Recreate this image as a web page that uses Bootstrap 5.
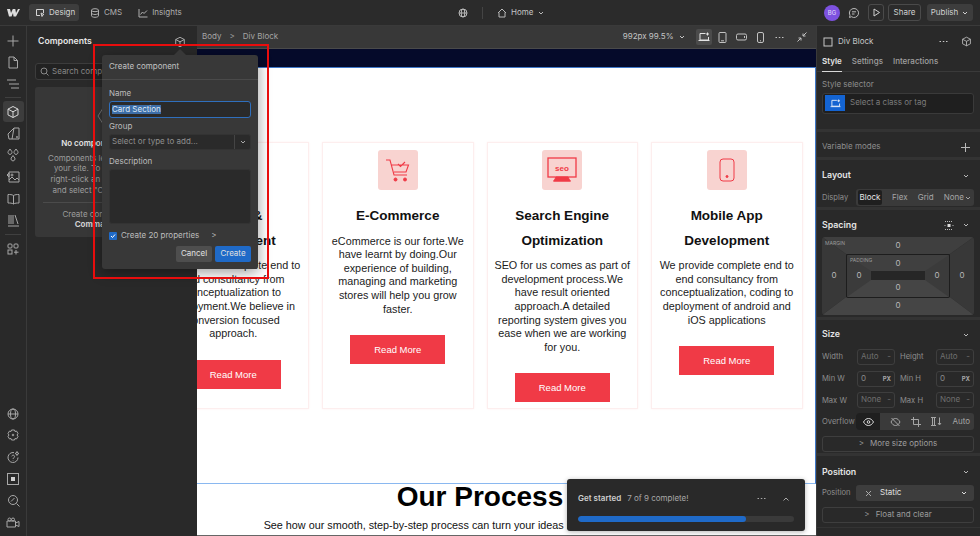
<!DOCTYPE html>
<html lang="en">
<head>
<meta charset="UTF-8">
<title>Designer</title>
<link href="https://cdn.jsdelivr.net/npm/bootstrap@5.3.3/dist/css/bootstrap.min.css" rel="stylesheet">
<style>
  html, body { height: 100%; overflow: hidden; }
  body { background: #292929; color: #b9b9b9; font: 8px/1.2 Inter, "Liberation Sans", sans-serif; }
  svg { display: block; flex: none; fill: none; stroke: currentColor; stroke-width: 1; }
  .app-shell { position: relative; width: 980px; height: 536px; }
  .top-bar { height: 26px; background: #2b2b2b; border-bottom: 1px solid #3a3a3a; padding: 0 6px 0 7px; }
  .top-left, .top-mid, .top-right { height: 25px; }
  .top-left { width: 421px; }
  .top-mid { width: 396px; padding-left: 30px; }
  .logo-mark { width: 13px; margin-right: 9px; color: #ddd; }
  .tab-design { width: 50px; height: 17px; background: #3d3d3d; border-radius: 3px; color: #d4d4d4; gap: 4px; padding-left: 6px; }
  .tab-plain { gap: 4px; margin-left: 16px; color: #b0b0b0; }
  .tab-cms { margin-left: 11px; }
  .v-rule { width: 1px; height: 12px; background: #444; margin: 0 14px 0 14px; }
  .avatar { width: 16px; height: 16px; border-radius: 50%; background: #7d52e0; color: #e4dcfa; font-size: 6px; margin-right: 8px; }
  .ghost-box { height: 17px; border: 1px solid #4a4a4a; border-radius: 3px; color: #d0d0d0; }
  .publish-btn { width: 46px; height: 17px; background: #3d3d3d; border-radius: 3px; color: #d0d0d0; margin-left: 6px; gap: 3px; }

  .work-area { height: 510px; }
  .left-rail { width: 27px; border-right: 1px solid #3a3a3a; background: #292929; color: #a8a8a8; padding-top: 4px; }
  .rail-item { width: 27px; height: 21.7px; }
  .rail-item.is-on { position: relative; color: #d8d8d8; }
  .rail-item.is-on::before { content: ""; position: absolute; left: 3px; top: 0; width: 21px; height: 21px; background: #3d3d3d; border-radius: 3px; z-index: 0; }
  .rail-item.is-on svg { position: relative; }
  .rail-gap { width: 16px; height: 1px; background: #404040; margin: 2px auto 3px; }
  .rail-bottom { margin-top: auto; padding-bottom: 3px; }

  .side-panel { width: 170px; background: #292929; padding: 0 8px; position: relative; }
  .panel-head { height: 30px; padding: 1px 3px 0; color: #e6e6e6; font-weight: 600; font-size: 8.7px; }
  .panel-search { height: 17px; margin-top: 7px; border: 1px solid #3c3c3c; border-radius: 3px; background: #222; color: #888; padding-left: 4px; gap: 3px; }
  .empty-box { margin-top: 7px; height: 150px; background: #373737; border-radius: 3px; text-align: center; padding: 17px 0 0; line-height: 10.7px; color: #9d9d9d; white-space: nowrap; }
  .empty-hex { margin: 0 auto 10px; color: #777; }
  .empty-title { color: #e4e4e4; font-weight: 600; margin-bottom: 4px; }
  .empty-rule { height: 1px; background: #4b4b4b; margin: 6px 8px; }

  .center-col { width: 619px; }
  .crumb-bar { height: 23px; background: #383838; border-bottom: 1px solid #4a4a4a; padding: 0 5px 0 5px; color: #a5a5a5; }
  .crumb-sep { margin: 0 8px; }
  .size-readout { color: #c4c4c4; margin-right: 10px; gap: 4px; }
  .device-on { width: 16px; height: 16px; background: #4b4b4b; border-radius: 2px; color: #e4e4e4; margin-right: 1.5px; }
  .device-btn { width: 19px; color: #c2c2c2; }
  .device-last { margin-left: 3px; }

  .canvas-view { flex: 1; background: #fff; overflow: hidden; position: relative; border-bottom: 1px solid #666; }
  .navy-strip { height: 18px; background: #050a2a; }
  .site-page { margin-left: -53px; width: 672px; color: #111; font-family: "Liberation Sans", Arial, sans-serif; }
  .selected-block { border: 1px solid #3f78c8; border-bottom-color: #8ab8f0; border-left: 0; padding: 74px 12.5px 0 13.5px; height: 417px; }
  .svc-row { gap: 13px; height: 267px; }
  .svc-card { flex: 1 1 0; min-width: 0; border: 1px solid #fdeeee; box-shadow: 0 0 2px #fff0f0; padding: 7px 6px 0; text-align: center; }
  .svc-icon { width: 40px; height: 40px; background: #f8d3d0; border-radius: 3px; margin: 0 auto 14px; color: #f03a46; }
  .svc-title { font-size: 13.5px; font-weight: 700; line-height: 24.6px; margin: 0 0 6px; color: #111; }
  .svc-text { font-size: 10.8px; line-height: 13.6px; margin: 0 0 19px; color: #1b1b1b; }
  .svc-btn { display: block; width: 95px; height: 29px; line-height: 29px; margin: 0 auto; background: #f03a46; color: #fff; font-size: 9.5px; }
  .process-title { font-size: 28px; font-weight: 700; line-height: 26px; margin: 0; text-align: center; color: #000; }
  .process-sub { font-size: 10.8px; line-height: 14px; margin: 8px 0 0; text-align: center; white-space: nowrap; }

  .style-panel { width: 164px; border-left: 1px solid #3a3a3a; background: #292929; }
  .sp-head { height: 24px; padding: 7px 8px 0 6px; color: #c8c8c8; gap: 5px; }
  .sp-tabs { height: 22px; padding: 0 5px; border-bottom: 1px solid #3a3a3a; gap: 10px; color: #a0a0a0; font-weight: 500; }
  .sp-tab-on { color: #e6e6e6; font-weight: 600; height: 22px; line-height: 22px; border-bottom: 1px solid #d8d8d8; }
  .sp-sec { padding: 0 6px 0 5px; border-bottom: 3px solid #333; }
  .sec-title { color: #e4e4e4; font-weight: 600; font-size: 8.8px; }
  .sec-chev { margin-right: 4px; }
  .muted-lbl { color: #8d8d8d; }
  .row-lbl { font-size: 7.6px; }
  .sel-box { height: 21px; background: #1f1f1f; border: 1px solid #3a3a3a; border-radius: 3px; margin-top: 3px; padding-left: 2px; gap: 5px; color: #7c7c7c; }
  .sel-chip { width: 20px; height: 16px; background: #1464d2; color: #e6effa; }
  .seg-group { width: 118px; height: 17px; background: #3a3a3a; border-radius: 3px; color: #a6a6a6; padding: 0 2px 0 2px; }
  .seg-on { background: #1f1f1f; color: #e6e6e6; border-radius: 2px; height: 15px; width: 24px; }
  .spacing-box { position: relative; height: 78px; color: #b9b9b9; border-radius: 3px; overflow: hidden; }
  .spacing-bg { position: absolute; inset: 0; width: 100%; height: 100%; stroke: none; }
  .spacing-lbl { position: absolute; font-size: 5px; color: #9a9a9a; }
  .spacing-val { position: absolute; transform: translate(-50%, -50%); }
  .size-row { height: 21.7px; gap: 5px; }
  .size-lbl { width: 30px; color: #8d8d8d; font-size: 7.6px; }
  .size-lbl-r { width: 31px; color: #8d8d8d; font-size: 7.6px; }
  .size-input { width: 38px; height: 16px; border: 1px solid #3e3e3e; border-radius: 3px; padding: 0 3px; color: #707070; }
  .size-input b { font-size: 6px; color: #a8a8a8; }
  .size-input.has-num { color: #8a8a8a; }
  .ovf-group { width: 118px; height: 17px; background: #3a3a3a; border-radius: 3px; color: #a6a6a6; overflow: hidden; }
  .ovf-on { width: 24px; height: 17px; background: #1f1f1f; color: #ddd; }
  .wide-btn { height: 16px; border: 1px solid #3e3e3e; border-radius: 3px; color: #9d9d9d; gap: 6px; }
  .pos-select { width: 118px; height: 16px; background: #3d3d3d; border-radius: 3px; padding: 0 6px 0 9px; color: #e0e0e0; }

  .create-pop { position: absolute; left: 102px; top: 55px; width: 156px; height: 214px; background: #383838; border-radius: 3px; box-shadow: 0 3px 14px rgba(0,0,0,.4); color: #bdbdbd; z-index: 5; padding: 0 7px; }
  .create-pop::before { content: ""; position: absolute; left: 72px; top: -6px; border: 6px solid transparent; border-top: 0; border-bottom-color: #383838; }
  .pop-head { height: 25px; margin: 0 -7px; padding: 0 7px; border-bottom: 1px solid #4a4a4a; color: #c2c2c2; }
  .pop-lbl { line-height: 11px; }
  .pop-input { height: 17px; margin-top: 2px; background: #2a2a2a; border: 1px solid #2f6fbd; border-radius: 3px; padding-left: 2px; color: #d8d8d8; }
  .text-hl { background: #3d6ea8; color: #dfe9f5; }
  .pop-select { height: 16px; margin-top: 2px; background: #2a2a2a; border: 1px solid #333; border-radius: 3px; color: #8f8f8f; padding-left: 2px; }
  .pop-select-arrow { width: 16px; height: 14px; border-left: 1px solid #444; color: #aaa; }
  .pop-area { height: 55px; margin-top: 2px; background: #2a2a2a; border: 1px solid #333; border-radius: 3px; }
  .pop-check { width: 8px; height: 8px; background: #1f6ac8; border-radius: 1px; color: #fff; }
  .pop-btn { height: 16px; border-radius: 2px; color: #e0e0e0; }
  .red-frame { position: absolute; left: 93px; top: 44px; width: 176px; height: 235px; border: 2px solid #e80d0d; z-index: 6; pointer-events: none; }

  .start-toast { position: absolute; left: 567px; top: 479px; width: 238px; height: 52px; background: #292929; border-radius: 3px; padding: 0 11px; z-index: 4; color: #a8a8a8; box-shadow: 0 1px 5px rgba(0,0,0,.3); }
  .toast-bar { height: 6px; background: #3a3a3a; border-radius: 3px; margin-top: 8px; overflow: hidden; }
  .toast-fill { height: 6px; background: #1f6ac8; border-radius: 3px; }
</style>
</head>
<body>
<svg width="0" height="0" style="position:absolute">
  <defs>
    <symbol id="i-chev" viewBox="0 0 8 8"><path d="M2 3l2 2 2-2"/></symbol>
    <symbol id="i-cube" viewBox="0 0 14 14"><path d="M7 1.500l5 2.600v5.800l-5 2.600-5-2.600V4.100zM2 4.100l5 2.700 5-2.700M7 6.800v5.700"/></symbol>
  </defs>
</svg>

<div class="app-shell">
  <!-- top bar -->
  <div class="top-bar d-flex align-items-center">
    <div class="top-left d-flex align-items-center">
      <svg class="logo-mark" width="13" height="9" viewBox="0 0 13 9" style="stroke:none;fill:currentColor"><path d="M0 1h3l1 4 1.800-4h2.500l.7 4 2-4H13L9 8.500H6.500L6 5 4.500 8.500H2z"/></svg>
      <div class="tab-design d-flex align-items-center">
        <svg width="10" height="10" viewBox="0 0 10 10"><path d="M8.500 5V1.500h-7v6H5M6 5l3 1.500-1.500.5-.5 1.500z"/></svg>Design
      </div>
      <div class="tab-plain tab-cms d-flex align-items-center">
        <svg width="10" height="10" viewBox="0 0 10 10"><ellipse cx="5" cy="2.200" rx="3.500" ry="1.500"/><path d="M1.500 2.200v5.600c0 .8 1.600 1.500 3.500 1.500s3.500-.7 3.500-1.500V2.200M1.500 5c0 .8 1.600 1.500 3.500 1.500S8.500 5.800 8.500 5"/></svg>CMS
      </div>
      <div class="tab-plain d-flex align-items-center">
        <svg width="10" height="10" viewBox="0 0 10 10"><path d="M1 1v8h8.500M2.500 6.500l2-2.500 1.500 1.500L9 2.500"/></svg>Insights
      </div>
    </div>
    <div class="top-mid d-flex align-items-center">
      <svg width="10" height="10" viewBox="0 0 10 10"><circle cx="5" cy="5" r="4"/><ellipse cx="5" cy="5" rx="1.800" ry="4"/><path d="M1 5h8"/></svg>
      <span class="v-rule"></span>
      <svg width="10" height="10" viewBox="0 0 10 10" class="me-1"><path d="M1 5l4-4 4 4M2 4.500V9h6V4.500"/></svg>
      <span style="color:#c4c4c4">Home</span>
      <svg width="8" height="8" class="ms-1"><use href="#i-chev"/></svg>
    </div>
    <div class="top-right d-flex align-items-center">
      <div class="avatar d-flex align-items-center justify-content-center">BG</div>
      <svg width="12" height="12" viewBox="0 0 12 12" class="me-2"><path d="M6 1.500a4.500 4.500 0 1 1-2.500 8.200L1.500 10.500l.5-2.200A4.500 4.500 0 0 1 6 1.500zM4 4.800h4M4 7h2.500"/></svg>
      <div class="ghost-box d-flex align-items-center justify-content-center" style="width:16px">
        <svg width="9" height="9" viewBox="0 0 9 9"><path d="M2 1l5.500 3.500L2 8z"/></svg>
      </div>
      <div class="ghost-box d-flex align-items-center justify-content-center ms-1" style="width:33px">Share</div>
      <div class="publish-btn d-flex align-items-center justify-content-center">Publish<svg width="8" height="8"><use href="#i-chev"/></svg></div>
    </div>
  </div>

  <div class="work-area d-flex">
    <!-- left icon rail -->
    <div class="left-rail d-flex flex-column align-items-center">
      <div class="rail-item d-flex align-items-center justify-content-center"><svg width="12" height="12" viewBox="0 0 12 12"><path d="M6 .5v11M.5 6h11"/></svg></div>
      <div class="rail-item d-flex align-items-center justify-content-center"><svg width="12" height="13" viewBox="0 0 12 13"><path d="M2 1h5l3.500 3.500V12H2zM7 1v3.500h3.500"/></svg></div>
      <div class="rail-item d-flex align-items-center justify-content-center"><svg width="14" height="10" viewBox="0 0 14 10"><path d="M1 1h9M3 5h10M5 9h8"/></svg></div>
      <div class="rail-gap"></div>
      <div class="rail-item is-on d-flex align-items-center justify-content-center"><svg width="14" height="14"><use href="#i-cube"/></svg></div>
      <div class="rail-item d-flex align-items-center justify-content-center"><svg width="13" height="13" viewBox="0 0 13 13"><path d="M7 1h5v11H5zM7 1L1 7l1 5h3" /><circle cx="10" cy="10" r=".6"/></svg></div>
      <div class="rail-item d-flex align-items-center justify-content-center"><svg width="12" height="14" viewBox="0 0 12 14"><path d="M3 1l1.800 2.500a2 2 0 1 1-3.600 0zM9 1l1.800 2.500a2 2 0 1 1-3.600 0zM6 7.500l1.800 2.500a2 2 0 1 1-3.600 0z"/></svg></div>
      <div class="rail-item d-flex align-items-center justify-content-center"><svg width="14" height="13" viewBox="0 0 14 13"><path d="M3 2h10v10H3zM3 10l3-3 3 3 2-2 2 2M1 5l2-2v4z"/><circle cx="6" cy="5" r="1"/></svg></div>
      <div class="rail-item d-flex align-items-center justify-content-center"><svg width="13" height="12" viewBox="0 0 13 12"><path d="M6.500 2.500C5 1.500 3 1.500 1 1.500v8.500c2 0 4 0 5.500 1 1.500-1 3.500-1 5.500-1V1.500c-2 0-4 0-5.500 1zM6.500 2.500V11"/></svg></div>
      <div class="rail-item d-flex align-items-center justify-content-center"><svg width="13" height="13" viewBox="0 0 13 13"><path d="M2 1v9M4 1v9M6 1v9M8 1l3 9M1 12h11"/></svg></div>
      <div class="rail-gap" style="margin:3px auto 3px"></div>
      <div class="rail-item d-flex align-items-center justify-content-center"><svg width="12" height="12" viewBox="0 0 12 12"><rect x="1" y="1" width="4" height="4" rx="1"/><rect x="7" y="1" width="4" height="4" rx="1"/><rect x="1" y="7" width="4" height="4"/><path d="M9 7v4.500M7 9.200h4.500"/></svg></div>
      <div class="rail-bottom d-flex flex-column align-items-center">
        <div class="rail-item d-flex align-items-center justify-content-center"><svg width="12" height="12" viewBox="0 0 12 12"><circle cx="6" cy="6" r="5"/><ellipse cx="6" cy="6" rx="2.500" ry="5"/><path d="M1 6h10"/></svg></div>
        <div class="rail-item d-flex align-items-center justify-content-center"><svg width="12" height="12" viewBox="0 0 12 12"><path d="M4.500 1h3l.5 1.500 1.600-.4 1.400 2.500-1 1.400 1 1.400-1.400 2.500-1.600-.4-.5 1.500h-3L4 9.500l-1.600.4L1 7.400l1-1.400-1-1.400 1.400-2.500L4 2.500z"/><circle cx="6" cy="6" r=".8"/></svg></div>
        <div class="rail-item d-flex align-items-center justify-content-center"><svg width="13" height="13" viewBox="0 0 13 13"><path d="M7 1.600A5 5 0 1 0 11 6.500M4.800 5.300a1.400 1.400 0 1 1 2 1.500c-.5.300-.8.600-.8 1.200M6 9.500v.5M10 .5l.6 1.400 1.400.6-1.400.6-.6 1.400-.6-1.400L8 2.500l1.400-.6z"/></svg></div>
        <div class="rail-item d-flex align-items-center justify-content-center"><svg width="12" height="12" viewBox="0 0 12 12"><rect x=".5" y=".5" width="11" height="11"/><rect x="4" y="4" width="4" height="4" style="fill:#cfcfcf;stroke:none"/></svg></div>
        <div class="rail-item d-flex align-items-center justify-content-center"><svg width="13" height="13" viewBox="0 0 13 13"><circle cx="6" cy="6" r="4.500"/><path d="M9.500 9.500l3 3M4 7.500L7.500 4"/></svg></div>
        <div class="rail-item d-flex align-items-center justify-content-center"><svg width="14" height="11" viewBox="0 0 14 11"><path d="M1 4h8.500v6H1zM9.500 6L13 4.500v5L9.500 8"/><circle cx="3.500" cy="2.500" r="1.500"/><circle cx="7" cy="2.500" r="1.500"/></svg></div>
      </div>
    </div>

    <!-- components panel -->
    <div class="side-panel">
      <div class="panel-head d-flex align-items-center justify-content-between">
        <span>Components</span>
        <svg width="12" height="12" style="color:#bbb"><use href="#i-cube"/></svg>
      </div>
      <div class="panel-search d-flex align-items-center">
        <svg width="9" height="9" viewBox="0 0 9 9"><circle cx="4" cy="4" r="3"/><path d="M6.300 6.300L8.500 8.500"/></svg>Search components
      </div>
      <div class="empty-box">
        <svg class="empty-hex" width="30" height="24" viewBox="0 0 30 24"><path d="M8 1h14l7 11-7 11H8L1 12z"/></svg>
        <div class="empty-title">No components added yet</div>
        Components let you reuse groups<br>your site. To create one, select<br>right-click an element on canvas<br>and select "Create component"
        <div class="empty-rule"></div>
        Create components with a<br><b style="color:#cfcfcf">Command+Shift+A</b>
      </div>
    </div>

    <!-- canvas -->
    <div class="center-col d-flex flex-column">
      <div class="crumb-bar d-flex align-items-center">
        <span>Body</span><span class="crumb-sep">&gt;</span><span>Div Block</span>
        <div class="ms-auto d-flex align-items-center">
          <div class="size-readout d-flex align-items-center"><span>992px 99.5%</span><svg width="8" height="8"><use href="#i-chev"/></svg></div>
          <div class="device-on d-flex align-items-center justify-content-center"><svg width="12" height="10" viewBox="0 0 12 10"><path d="M7.500 1.500H2v6.500h8.500V5M.5 8.500h11"/><path d="M9.500.5v3M8 2h3"/></svg></div>
          <div class="device-btn d-flex justify-content-center"><svg width="9" height="11" viewBox="0 0 9 11"><rect x="1" y=".5" width="7" height="10" rx="1"/><path d="M3 8.800h3"/></svg></div>
          <div class="device-btn d-flex justify-content-center"><svg width="11" height="8" viewBox="0 0 11 8"><rect x=".5" y="1" width="10" height="6" rx="1.500"/><path d="M8.500 3v2"/></svg></div>
          <div class="device-btn d-flex justify-content-center"><svg width="7" height="11" viewBox="0 0 7 11"><rect x=".5" y=".5" width="6" height="10" rx="1.500"/><path d="M3 8.800h1"/></svg></div>
          <div class="device-btn d-flex justify-content-center"><svg width="9" height="3" viewBox="0 0 9 3"><path d="M.5 1.500h1.500M3.800 1.500h1.500M7 1.500h1.500"/></svg></div>
          <div class="device-btn device-last d-flex justify-content-center"><svg width="10" height="10" viewBox="0 0 10 10"><path d="M9.500.5L6 4M6 1.500V4h2.500M.5 9.500L4 6M1.500 6H4v2.500"/></svg></div>
        </div>
      </div>
      <div class="canvas-view">
        <div class="navy-strip"></div>
        <div class="site-page">
          <div class="selected-block">
            <div class="svc-row d-flex">
              <div class="svc-card">
                <div class="svc-icon"></div>
                <h5 class="svc-title">Design &amp;<br>Development</h5>
                <p class="svc-text">We provide complete end to<br>end consultancy from<br>conceptualization to<br>deployment.We believe in<br>conversion focused<br>approach.</p>
                <a class="svc-btn text-decoration-none">Read More</a>
              </div>
              <div class="svc-card">
                <div class="svc-icon d-flex align-items-center justify-content-center">
                  <svg width="26" height="26" viewBox="0 0 26 26"><path d="M1 3h4l4 15h13M6.500 8h17l-2.500 7H9M13 7l2.500 2.500L20 5" stroke-width="1.100"/><circle cx="10.500" cy="22.500" r="1.500" style="fill:currentColor"/><circle cx="20" cy="22.500" r="1.500" style="fill:currentColor"/></svg>
                </div>
                <h5 class="svc-title">E-Commerce</h5>
                <p class="svc-text">eCommerce is our forte.We have learnt by doing.Our experience of building, managing and marketing stores will help you grow faster.</p>
                <a class="svc-btn text-decoration-none">Read More</a>
              </div>
              <div class="svc-card">
                <div class="svc-icon d-flex align-items-center justify-content-center">
                  <svg width="30" height="26" viewBox="0 0 30 26"><rect x="1" y="1" width="28" height="19" stroke-width="1.300"/><path d="M9 20h12l2 4H7zM6 24h18" style="fill:currentColor"/><text x="15" y="14" text-anchor="middle" style="font:700 8px 'Liberation Sans',sans-serif;fill:currentColor;stroke:none">seo</text></svg>
                </div>
                <h5 class="svc-title">Search Engine<br>Optimization</h5>
                <p class="svc-text">SEO for us comes as part of development process.We have result oriented approach.A detailed reporting system gives you ease when we are working for you.</p>
                <a class="svc-btn text-decoration-none">Read More</a>
              </div>
              <div class="svc-card">
                <div class="svc-icon d-flex align-items-center justify-content-center">
                  <svg width="16" height="24" viewBox="0 0 16 24"><rect x="1" y="1" width="14" height="22" rx="3"/><circle cx="8" cy="18.500" r="1" style="fill:currentColor"/></svg>
                </div>
                <h5 class="svc-title">Mobile App<br>Development</h5>
                <p class="svc-text">We provide complete end to end consultancy from conceptualization, coding to deployment of android and iOS applications</p>
                <a class="svc-btn text-decoration-none">Read More</a>
              </div>
            </div>
          </div>
          <h2 class="process-title">Our Process</h2>
          <p class="process-sub">See how our smooth, step-by-step process can turn your ideas into reality with confidence.</p>
        </div>
      </div>
    </div>

    <!-- style panel -->
    <div class="style-panel">
      <div class="sp-head d-flex align-items-center">
        <svg width="10" height="10" viewBox="0 0 10 10"><rect x="1" y="1" width="8" height="8"/></svg>
        <span>Div Block</span>
        <svg class="ms-auto me-2" width="9" height="3" viewBox="0 0 9 3"><path d="M.5 1.500h1.500M3.800 1.500h1.500M7 1.500h1.500"/></svg>
        <svg width="11" height="11"><use href="#i-cube"/></svg>
      </div>
      <div class="sp-tabs d-flex">
        <span class="sp-tab-on">Style</span><span style="line-height:22px">Settings</span><span style="line-height:22px">Interactions</span>
      </div>
      <div class="sp-sec" style="height:60px;padding-top:8px">
        <div class="muted-lbl">Style selector</div>
        <div class="sel-box d-flex align-items-center">
          <div class="sel-chip d-flex align-items-center justify-content-center"><svg width="11" height="9" viewBox="0 0 12 10"><path d="M7.500 1.500H2v6.500h8.500V5M.5 8.500h11"/><path d="M9.500.5v3M8 2h3"/></svg></div>
          <span>Select a class or tag</span>
        </div>
      </div>
      <div class="sp-sec d-flex align-items-center justify-content-between" style="height:28px;padding-top:5px">
        <span class="muted-lbl">Variable modes</span>
        <svg class="sec-chev" width="9" height="9" viewBox="0 0 9 9"><path d="M4.500 0v9M0 4.500h9"/></svg>
      </div>
      <div class="sp-sec" style="height:50px">
        <div class="d-flex align-items-center justify-content-between" style="height:29px;padding-top:2px"><span class="sec-title">Layout</span><svg class="sec-chev" width="8" height="8"><use href="#i-chev"/></svg></div>
        <div class="d-flex align-items-center justify-content-between">
          <span class="muted-lbl row-lbl">Display</span>
          <div class="seg-group d-flex align-items-center justify-content-between">
            <span class="seg-on d-flex align-items-center justify-content-center">Block</span><span>Flex</span><span>Grid</span><span class="d-flex align-items-center">None<svg width="8" height="8"><use href="#i-chev"/></svg></span>
          </div>
        </div>
      </div>
      <div class="sp-sec" style="height:110px">
        <div class="d-flex align-items-center" style="height:27px;padding-top:3px">
          <span class="sec-title">Spacing</span>
          <svg class="ms-auto me-2" width="10" height="9" viewBox="0 0 10 9"><path d="M1 .5h8M1 8.500h8M.5 4.500h1M8.500 4.500h1" stroke-dasharray="1 1"/><rect x="3.500" y="3" width="3" height="3" style="fill:#ddd;stroke:none"/></svg>
          <svg class="sec-chev" width="8" height="8"><use href="#i-chev"/></svg>
        </div>
        <div class="spacing-box">
          <svg class="spacing-bg" viewBox="0 0 152 78" preserveAspectRatio="none">
            <polygon points="0,0 152,0 128,17 24,17" style="fill:#3f3f3f"/>
            <polygon points="0,78 152,78 128,60 24,60" style="fill:#454545"/>
            <polygon points="0,0 24,17 24,60 0,78" style="fill:#383838"/>
            <polygon points="152,0 128,17 128,60 152,78" style="fill:#383838"/>
            <rect x="24" y="17" width="104" height="44" rx="2" style="fill:#1d1d1d"/>
            <rect x="25" y="18" width="102" height="42" rx="1" style="fill:#3b3b3b"/>
            <polygon points="25,18 127,18 103,34 49,34" style="fill:#404040"/>
            <polygon points="25,60 127,60 103,43 49,43" style="fill:#454545"/>
            <rect x="49" y="34" width="54" height="9" style="fill:#262626"/>
          </svg>
          <span class="spacing-lbl" style="left:3px;top:3px">MARGIN</span>
          <span class="spacing-lbl" style="left:28px;top:20px">PADDING</span>
          <span class="spacing-val" style="left:76px;top:9px">0</span>
          <span class="spacing-val" style="left:76px;top:27px">0</span>
          <span class="spacing-val" style="left:76px;top:51px">0</span>
          <span class="spacing-val" style="left:76px;top:69px">0</span>
          <span class="spacing-val" style="left:12px;top:39px">0</span>
          <span class="spacing-val" style="left:37px;top:39px">0</span>
          <span class="spacing-val" style="left:115px;top:39px">0</span>
          <span class="spacing-val" style="left:140px;top:39px">0</span>
        </div>
      </div>
      <div class="sp-sec" style="height:136px">
        <div class="d-flex align-items-center justify-content-between" style="height:26px;padding-top:3px"><span class="sec-title">Size</span><svg class="sec-chev" width="8" height="8"><use href="#i-chev"/></svg></div>
        <div class="size-row d-flex align-items-center">
          <span class="size-lbl">Width</span><span class="size-input d-flex align-items-center justify-content-between">Auto<span>-</span></span>
          <span class="size-lbl-r">Height</span><span class="size-input d-flex align-items-center justify-content-between">Auto<span>-</span></span>
        </div>
        <div class="size-row d-flex align-items-center">
          <span class="size-lbl">Min W</span><span class="size-input has-num d-flex align-items-center justify-content-between">0<b>PX</b></span>
          <span class="size-lbl-r">Min H</span><span class="size-input has-num d-flex align-items-center justify-content-between">0<b>PX</b></span>
        </div>
        <div class="size-row d-flex align-items-center">
          <span class="size-lbl">Max W</span><span class="size-input d-flex align-items-center justify-content-between">None<span>-</span></span>
          <span class="size-lbl-r">Max H</span><span class="size-input d-flex align-items-center justify-content-between">None<span>-</span></span>
        </div>
        <div class="size-row d-flex align-items-center justify-content-between" style="gap:0">
          <span class="muted-lbl row-lbl">Overflow</span>
          <div class="ovf-group d-flex align-items-center justify-content-between">
            <span class="ovf-on d-flex align-items-center justify-content-center"><svg width="11" height="8" viewBox="0 0 11 8"><path d="M.5 4C2 1.500 3.500.5 5.500.5S9 1.500 10.500 4C9 6.500 7.500 7.500 5.500 7.500S2 6.500.5 4z"/><circle cx="5.500" cy="4" r="1.300"/></svg></span>
            <svg width="11" height="10" viewBox="0 0 11 10"><path d="M1 5c1.500-2.500 2.500-3.500 4.500-3.500S8.500 2.500 10 5C8.500 7.500 7.500 8.500 5.500 8.500S2.500 7.500 1 5zM1.500 1l8 8"/></svg>
            <svg width="10" height="10" viewBox="0 0 10 10"><path d="M2.500 0v7.500H10M0 2.500h7.500V10"/></svg>
            <svg width="11" height="9" viewBox="0 0 11 9"><path d="M0 .5h5M1.500.5v8M3.500.5v8M0 8.500h5M8.500.5v7M7 6l1.500 2L10 6"/></svg>
            <span class="pe-1">Auto</span>
          </div>
        </div>
        <div class="wide-btn d-flex align-items-center justify-content-center" style="margin-top:3px"><span>&gt;</span><span>More size options</span></div>
      </div>
      <div class="sp-sec" style="height:72px;border-bottom-width:1px">
        <div class="d-flex align-items-center justify-content-between" style="height:29px;padding-top:3px"><span class="sec-title">Position</span><svg class="sec-chev" width="8" height="8"><use href="#i-chev"/></svg></div>
        <div class="d-flex align-items-center justify-content-between">
          <span class="muted-lbl row-lbl">Position</span>
          <div class="pos-select d-flex align-items-center">
            <svg width="7" height="7" viewBox="0 0 7 7" style="color:#aaa"><path d="M1 1l5 5M6 1L1 6"/></svg>
            <span class="ms-2">Static</span>
            <svg class="ms-auto" width="8" height="8"><use href="#i-chev"/></svg>
          </div>
        </div>
        <div class="wide-btn d-flex align-items-center justify-content-center" style="margin-top:6px"><span>&gt;</span><span>Float and clear</span></div>
      </div>
    </div>
  </div>

  <!-- create component popover -->
  <div class="create-pop">
    <div class="pop-head d-flex align-items-center">Create component</div>
    <div class="pop-lbl" style="margin-top:8px">Name</div>
    <div class="pop-input d-flex align-items-center"><span class="text-hl">Card Section</span></div>
    <div class="pop-lbl" style="margin-top:3px">Group</div>
    <div class="pop-select d-flex align-items-center justify-content-between">
      <span>Select or type to add...</span>
      <span class="pop-select-arrow d-flex align-items-center justify-content-center"><svg width="8" height="8"><use href="#i-chev"/></svg></span>
    </div>
    <div class="pop-lbl" style="margin-top:6px">Description</div>
    <div class="pop-area"></div>
    <div class="d-flex align-items-center" style="margin-top:7px;gap:4px;height:10px">
      <span class="pop-check d-flex align-items-center justify-content-center"><svg width="6" height="6" viewBox="0 0 6 6"><path d="M1 3l1.500 1.500L5 1.500"/></svg></span>
      <span>Create 20 properties</span>
      <span style="margin-left:8px">&gt;</span>
    </div>
    <div class="d-flex justify-content-end" style="gap:3px;margin-top:5px">
      <div class="pop-btn d-flex align-items-center justify-content-center" style="width:36px;background:#4e4e4e">Cancel</div>
      <div class="pop-btn d-flex align-items-center justify-content-center" style="width:36px;background:#1f6ac8">Create</div>
    </div>
  </div>
  <div class="red-frame"></div>

  <!-- onboarding toast -->
  <div class="start-toast">
    <div class="d-flex align-items-center" style="height:19px;margin-top:10px">
      <span style="color:#cfcfcf;font-weight:600">Get started</span>
      <span style="margin-left:6px">7 of 9 complete!</span>
      <svg class="ms-auto" width="9" height="3" viewBox="0 0 9 3"><path d="M.5 1.500h1.500M3.800 1.500h1.500M7 1.500h1.500"/></svg>
      <svg class="ms-3" width="8" height="8" viewBox="0 0 8 8" style="margin-right:4px"><path d="M1.500 5.500L4 3l2.500 2.500"/></svg>
    </div>
    <div class="toast-bar"><div class="toast-fill" style="width:78%"></div></div>
  </div>
</div>
<script src="https://cdn.jsdelivr.net/npm/bootstrap@5.3.3/dist/js/bootstrap.bundle.min.js"></script>
</body>
</html>
